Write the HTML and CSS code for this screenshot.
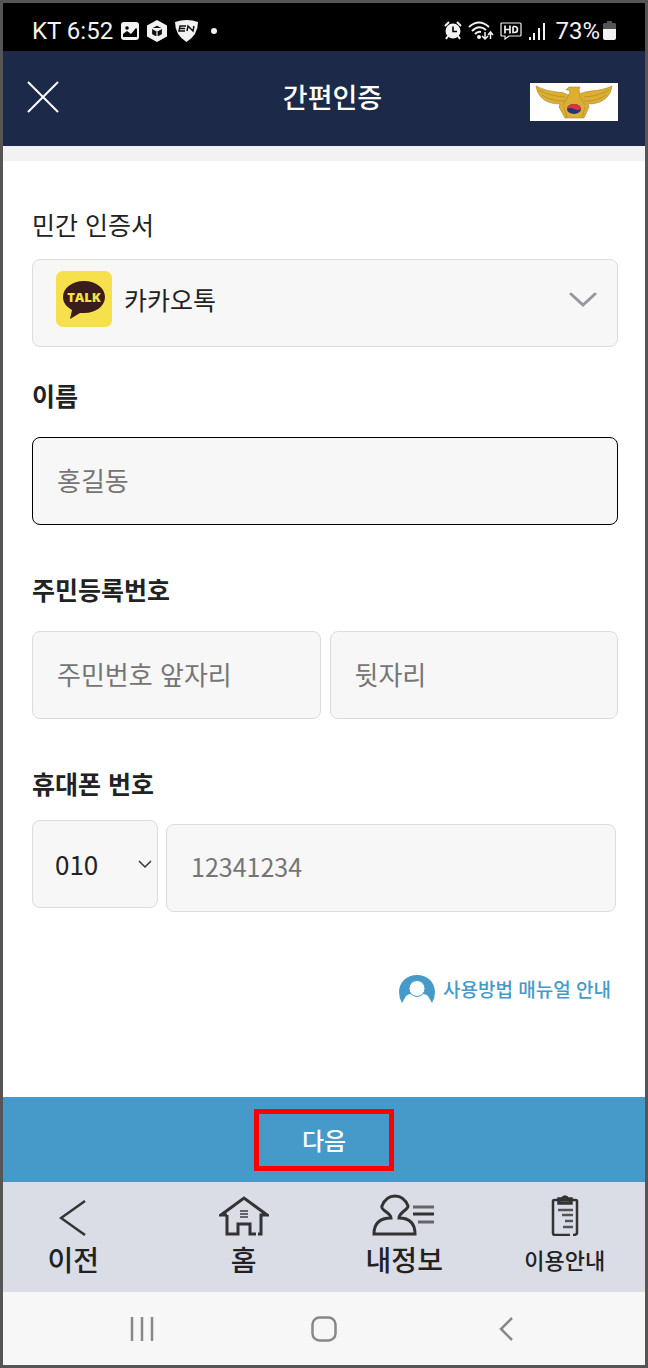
FILE: index.html
```html
<!DOCTYPE html>
<html lang="ko">
<head>
    <meta charset="UTF-8">
    <meta name="viewport" content="width=device-width, initial-scale=1.0">
    <title>간편인증</title>
    <link rel="stylesheet" href="styles.css">
</head>
<body>
<div class="phone">
    <!-- Status bar -->
    <div class="status-bar">
        <div class="status-left">
            <span>KT 6:52</span>
            <svg width="18" height="18" viewBox="0 0 18 18"><rect width="18" height="18" rx="3" fill="#f2f2f2"/><path d="M2 15V12l4-3 4 3 5-6 1 1v8z" fill="#000"/><circle cx="6" cy="6" r="1.8" fill="#000"/></svg>
            <svg width="20" height="22" viewBox="0 0 20 22"><path d="M10 0l10 5.500v11L10 22 0 16.500v-11z" fill="#f2f2f2"/><path d="M10 5l5.500 3v6.500L10 17.500l-5.500-3V8zM4.500 8l5.500 3 5.500-3M10 11v6.500" fill="#111" stroke="#f2f2f2" stroke-width="1.200"/></svg>
            <svg width="23" height="22" viewBox="0 0 23 22"><path d="M0 2Q12-2 23 2Q23 15 11.500 22Q0 15 0 2z" fill="#f2f2f2"/><path d="M11 6H5l-1 5h6M5 8.500h5M12 11l1-5 5 5 1-5" fill="none" stroke="#111" stroke-width="1.500"/></svg>
            <span class="dot"></span>
        </div>
        <div class="status-right">
            <svg width="18" height="19" viewBox="0 0 18 19"><circle cx="9" cy="10" r="7.500" fill="#f2f2f2"/><path d="M1 5l4-4M17 5l-4-4M4 15l-2 3M14 15l2 3" stroke="#f2f2f2" stroke-width="2"/><path d="M9 5.500V10.500h4" fill="none" stroke="#000" stroke-width="1.600"/></svg>
            <svg width="26" height="20" viewBox="0 0 26 20" fill="none" stroke="#f2f2f2" stroke-width="2"><path d="M1 6Q11-3 21 6M4 10Q11 3 18 9M7 13Q10 10 13 11"/><circle cx="11" cy="16" r="1"/><path d="M17 11v7m-3-3l3 3 3-3M22.500 18v-7m-2.500 3l2.500-3 2.500 3" stroke-width="1.500"/></svg>
            <svg width="22" height="20" viewBox="0 0 22 20" fill="none" stroke="#f2f2f2"><path d="M2 2h18q1 0 1 1v11q0 1-1 1H9l-4 3v-3H2q-1 0-1-1V3q0-1 1-1z" stroke-width="1.200"/><path d="M5 4.500v8M10 4.500v8M5 8.500h5M13 5.500v6h1.500q3 0 3-3t-3-3H13" stroke-width="1.700"/></svg>
            <svg width="18" height="18" viewBox="0 0 18 18" fill="#f2f2f2"><path d="M1 15h2v3H1zM5 11h2v7H5zM10 6h2v12h-2zM15 1h2v17h-2z"/></svg>
            <span class="battery">73%<svg width="13" height="19" viewBox="0 0 13 19"><path d="M4 0h5v2h3l1 1v5H0V3l1-1h3z" fill="#555"/><path d="M0 8h13v9q0 2-2 2H2q-2 0-2-2z" fill="#f2f2f2"/></svg></span>
        </div>
    </div>

    <header class="app-header">
        <button class="close-button" aria-label="닫기">
            <svg width="32" height="32" viewBox="0 0 32 32"><path d="M1 1l30 30M31 1L1 31" stroke="#fff" stroke-width="2"/></svg>
        </button>
        <h1>간편인증</h1>
        <svg class="emblem" width="88" height="38" viewBox="0 0 88 38">
            <rect width="88" height="38" fill="#fff"/>
            <g fill="#dcae32" stroke="#a88732" stroke-width=".6">
                <path d="M6 3Q15 8 27 9Q34 9 38 12L40 10 39 7 36 7 39 4h11l-1 3 1 4Q53 9 61 8Q74 7 82 3Q81 11 76 15Q70 21 58 21L59 24L54 35H35L29 24L30 21Q17 21 11 14Q7 10 6 3z"/>
                <path d="M9 7q10 6 26 7M12 12q11 7 23 6M79 7q-10 6-25 7M76 12q-10 7-22 6M39 12l-6 10M49 12l6 10M34 24l3 11M55 24l-3 11" fill="none"/>
            </g>
            <ellipse cx="44" cy="26" rx="7" ry="5" fill="#24337f"/>
            <path d="M37 26a7 5 0 0 1 14 0q-3 2-7 0t-7 0z" fill="#d9363b"/>
        </svg>
    </header>

    <main>
        <form id="authForm" class="auth-form">
            <div class="field cert-field">
                <label class="light" for="cert">민간 인증서</label>
                <div class="select-box">
                    <select id="cert" class="control cert-select">
                        <option>카카오톡</option>
                    </select>
                    <svg class="talk-icon" width="56" height="56" viewBox="0 0 56 56">
                        <rect width="56" height="56" rx="7" fill="#f6e04b"/>
                        <path d="M28 10C16 10 7 17 7 26c0 6 4 10 9 13l-2 9 10-6h4c12 0 21-7 21-16S40 10 28 10z" fill="#3b1c1c"/>
                        <text x="28" y="31" text-anchor="middle">TALK</text>
                    </svg>
                    <svg class="arrow" width="28" height="16" viewBox="0 0 28 16"><path d="M2 2l12 11L26 2" fill="none" stroke="#97979f" stroke-width="3" stroke-linecap="round"/></svg>
                </div>
            </div>

            <div class="field">
                <label for="name">이름</label>
                <input type="text" id="name" class="control active" placeholder="홍길동">
            </div>

            <div class="field">
                <label for="idFront">주민등록번호</label>
                <div class="id-row">
                    <input type="text" id="idFront" class="control" placeholder="주민번호 앞자리">
                    <input type="text" class="control" placeholder="뒷자리" aria-label="주민번호 뒷자리">
                </div>
            </div>

            <div class="field phone-field">
                <label for="phoneNumber">휴대폰 번호</label>
                <div class="phone-row">
                    <div class="select-box">
                        <select class="control prefix-select" aria-label="휴대폰 앞번호">
                            <option>010</option>
                        </select>
                        <svg class="arrow small" width="14" height="10" viewBox="0 0 14 10"><path d="M1 1l6 6 6-6" fill="none" stroke="#333" stroke-width="1.500"/></svg>
                    </div>
                    <input type="tel" id="phoneNumber" class="control phone-input" placeholder="12341234">
                </div>
            </div>
        </form>

        <a class="manual-link" href="#">
            <svg width="36" height="28" viewBox="0 0 36 28"><path d="M3 28Q0 23 0 17C0 7 8 0 18 0s18 7 18 17q0 6-3 11l-4-7q-2-2-5-2H12q-3 0-5 2z" fill="#459aca"/><circle cx="18" cy="13.500" r="8" fill="#fff" stroke="#459aca"/></svg>
            <span>사용방법 매뉴얼 안내</span>
        </a>
    </main>

    <button type="submit" form="authForm" class="next-button"><span>다음</span></button>

    <!-- App menu -->
    <nav class="app-nav">
        <a href="#">
            <svg width="28" height="42" viewBox="0 0 28 42"><path d="M26 7L2 24l24 17" fill="none" stroke="#333" stroke-width="2.500"/></svg>
            <span>이전</span>
        </a>
        <a href="#">
            <svg width="50" height="42" viewBox="0 0 50 42" fill="none" stroke="#333" stroke-width="3"><path d="M8 21H2L25 4l23 17h-6v19h-3M8 21v19h11V30h12v10h6"/><path d="M21 17h8M21 20h8M21 23h8" stroke="#666" stroke-width="2"/></svg>
            <span>홈</span>
        </a>
        <a href="#">
            <svg width="64" height="42" viewBox="0 0 64 42" fill="none" stroke="#333" stroke-width="3"><path d="M19 24Q19 21 13 17Q9 14 10 12Q14 2 23 2Q32 2 36 12Q36 14 32 17Q27 21 27 24Q43 24 43 40H2Q2 24 19 24z"/><path d="M41 13h21M46 28h16" stroke="#666"/><path d="M41 20h21"/></svg>
            <span>내정보</span>
        </a>
        <a href="#" class="guide">
            <svg width="28" height="42" viewBox="0 0 28 42" fill="none" stroke="#333" stroke-width="2.500"><path d="M19 41H4q-2 0-2-2V7q0-1 2-1h20q2 0 2 1v32q0 2-4 2"/><path d="M8 5h3q3-4 6 0h3v4H8z" stroke-width="3.500"/><path d="M7 16h15M11 21h11M14 27h8M12 33h10" stroke="#555"/></svg>
            <span>이용안내</span>
        </a>
    </nav>

    <div class="system-nav">
        <button aria-label="최근 앱"><svg width="24" height="24" viewBox="0 0 24 24"><path d="M2 0v24M12 0v24M22 0v24" stroke="#888" stroke-width="2.500"/></svg></button>
        <button aria-label="홈 화면"><svg width="26" height="26" viewBox="0 0 26 26"><rect x="1.500" y="1.500" width="23" height="23" rx="7" fill="none" stroke="#888" stroke-width="2.500"/></svg></button>
        <button aria-label="뒤로"><svg width="14" height="24" viewBox="0 0 14 24"><path d="M13 1L2 12l11 11" fill="none" stroke="#888" stroke-width="2.500"/></svg></button>
    </div>
</div>
</body>
</html>
```

FILE: styles.css
```css
* {
    box-sizing: border-box;
}

body {
    margin: 0;
    font-family: "Noto Sans CJK KR", sans-serif;
    color: #222;
    background-color: #fff;
}

button, input, select {
    font-family: inherit;
}

button {
    border: none;
    padding: 0;
    background: none;
    cursor: pointer;
}

a {
    text-decoration: none;
}

svg {
    display: block;
    flex-shrink: 0;
}

.phone {
    display: flex;
    flex-direction: column;
    min-height: 100vh;
    border: 3px solid #555;
}

/* Status bar */
.status-bar {
    display: flex;
    justify-content: space-between;
    align-items: center;
    height: 48px;
    padding: 7px 29px 0;
    background-color: #000;
    color: #f2f2f2;
    font-family: Roboto, sans-serif;
    font-size: 24px;
}

.status-left, .status-right {
    display: flex;
    align-items: center;
    gap: 8px;
}

.status-right {
    gap: 6px;
}

.battery {
    display: flex;
    align-items: center;
    gap: 3px;
    padding-left: 3px;
}

.dot {
    width: 6px;
    height: 6px;
    margin-left: 5px;
    border-radius: 50%;
    background-color: #f2f2f2;
}

/* Header */
.app-header {
    display: grid;
    grid-template-columns: 88px 1fr 88px;
    align-items: center;
    height: 95px;
    padding: 0 27px 4px 24px;
    background-color: #1d2948;
}

.app-header h1 {
    margin: 0;
    padding-left: 20px;
    color: #fff;
    font-size: 27px;
    font-weight: 500;
    text-align: center;
}

.emblem {
    margin-top: 10px;
}

main {
    flex: 1;
    padding: 43px 27px 20px 29px;
    border-top: 15px solid #f2f2f2;
}

/* Form */
.field {
    display: flex;
    flex-direction: column;
    gap: 22px;
    margin-bottom: 44px;
}

.cert-field {
    gap: 15px;
    margin-bottom: 28px;
}

.phone-field {
    gap: 17px;
}

label {
    font-size: 25px;
    font-weight: 700;
    line-height: 40px;
}

label.light {
    font-weight: 400;
}

.control {
    width: 100%;
    min-width: 0;
    height: 88px;
    padding: 0 24px 4px;
    border: 1px solid #dcdcdc;
    border-radius: 8px;
    background-color: #f7f7f7;
    color: #222;
    font-size: 26px;
    appearance: none;
}

.control::placeholder {
    color: #757575;
    opacity: 1;
}

.control.active {
    border-color: #000;
}

.phone-input {
    font-size: 25px;
}

.select-box {
    position: relative;
}

.cert-select {
    display: block;
    padding: 0 60px 8px 91px;
    font-size: 25px;
}

.talk-icon {
    position: absolute;
    top: 12px;
    left: 24px;
    pointer-events: none;
}

.talk-icon text {
    fill: #f6e04b;
    font-family: "Open Sans", sans-serif;
    font-size: 13px;
    font-weight: 800;
}

.arrow {
    position: absolute;
    top: 33px;
    right: 21px;
    pointer-events: none;
}

.arrow.small {
    top: 40px;
    right: 6px;
}

.id-row {
    display: grid;
    grid-template-columns: 1fr 1fr;
    gap: 9px;
}

.phone-row {
    display: grid;
    grid-template-columns: 126px 1fr;
    align-items: end;
    gap: 8px;
    height: 92px;
    padding-right: 2px;
}

.phone-row .select-box {
    align-self: start;
}

.prefix-select {
    display: block;
    padding: 0 22px 2px;
}

.manual-link {
    display: flex;
    justify-content: flex-end;
    align-items: center;
    gap: 8px;
    margin-top: 63px;
    padding-right: 7px;
    color: #459aca;
    font-size: 19px;
    font-weight: 500;
    line-height: 28px;
}

.next-button {
    display: flex;
    justify-content: center;
    align-items: center;
    height: 85px;
    background-color: #459aca;
    color: #fff;
    font-size: 24px;
    font-weight: 500;
}

.next-button span {
    width: 140px;
    border: 5px solid #f00;
    line-height: 52px;
}

/* Bottom menus */
.app-nav {
    display: grid;
    grid-template-columns: repeat(4, 1fr);
    height: 110px;
    padding-top: 12px;
    background-color: #dadce6;
}

.app-nav a {
    display: flex;
    flex-direction: column;
    align-items: center;
    gap: 4px;
    color: #222;
    font-size: 28px;
    font-weight: 500;
    line-height: 38px;
}

.app-nav a:first-child {
    padding-right: 20px;
}

.app-nav .guide {
    font-size: 22px;
}

.system-nav {
    display: grid;
    grid-template-columns: repeat(3, 1fr);
    height: 73px;
    padding: 0 48px;
    background-color: #f7f7f7;
}

.system-nav button {
    display: flex;
    justify-content: center;
    align-items: center;
}
```
